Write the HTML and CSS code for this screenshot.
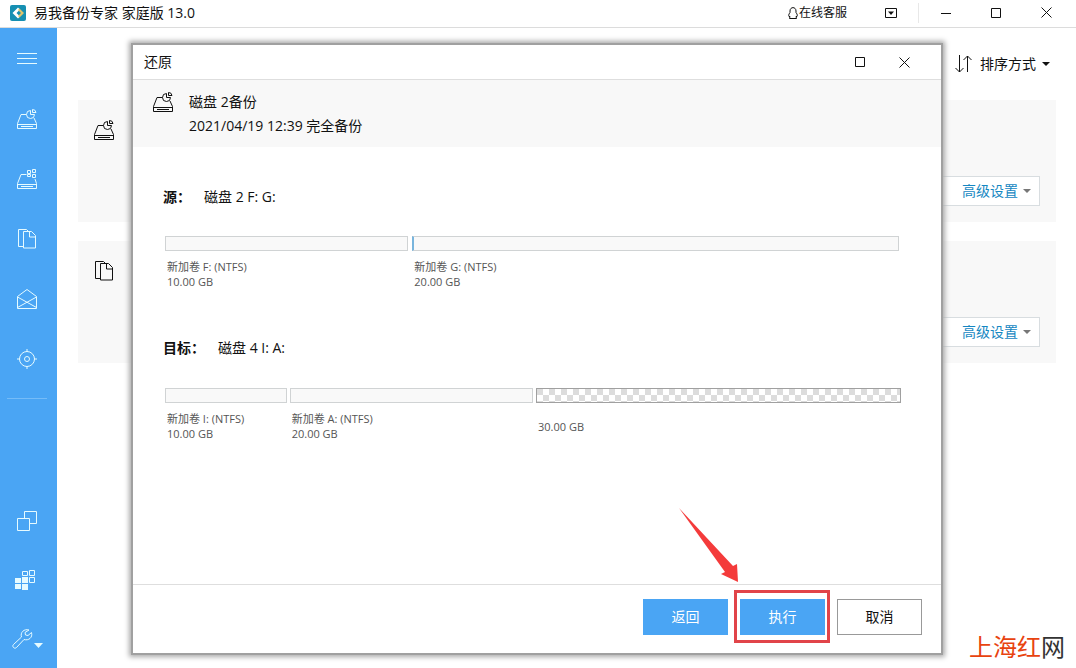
FILE: index.html
```html
<!DOCTYPE html>
<html lang="zh-CN">
<head>
<meta charset="utf-8">
<meta name="viewport" content="width=device-width, initial-scale=1">
<title>易我备份专家 家庭版 13.0</title>
<link rel="stylesheet" href="styles.css">
</head>
<body>
<svg class="defs" width="0" height="0" aria-hidden="true">
  <symbol id="disk" viewBox="0 0 20 20">
    <path d="M9.500 5.500H4L.5 14.500v5h19v-5L17 9M.5 15.500h19M4 17.500h12M13.500 1.500a4 4 0 1 0 4 4h-4zM15.500.5v3h3.500a3.500 3.500 0 0 0-3.500-3z"/>
  </symbol>
  <symbol id="system" viewBox="0 0 20 20">
    <path d="M9.500 5.500H4L.5 14.500v5h19v-5L18 10M.5 15.500h19M4 17.500h12M10.500 1.500h3v3h-3zM15.500.5h3v3h-3zM10.500 5.500h3v2h-3zM15.500 5.500h3v3h-3z"/>
  </symbol>
  <symbol id="files" viewBox="0 0 20 20">
    <path d="M6 17.500H1.500v-17h8l2 2M6.500 2.500h8l4 4v12.500h-12zM12.500 3v5h6"/>
  </symbol>
</svg>
<header class="titlebar">
  <svg class="logo" viewBox="0 0 16 16"><rect width="16" height="16" rx="2" fill="#168fb2"/><path d="M8 2.500 2.500 8 8 13.500l2-2L6.500 8 10 4.500z" fill="#fff"/><path d="m9.500 3.500-1.500 1.500L11 8l-3 3 1.500 1.500L14 8z" fill="#e0c46c"/></svg>
  <h1 class="app-name">易我备份专家 家庭版 13.0</h1>
  <button class="service"><svg class="qq" viewBox="0 0 10 12"><path d="M2 4C2-.5 8-.5 8 4v1.500c1.500 2 1.500 3 1 4H8l.5 2h-7l.5-2H1c-.5-1-.5-2 1-4z"/></svg>在线客服</button>
  <button class="win menu" aria-label="菜单"><svg width="12" height="12" viewBox="0 0 12 12"><path d="M.5 1.500h11v9H.5z"/><path class="solid" d="M3 4.500h6L6 8z"/></svg></button>
  <button class="win" aria-label="最小化"><svg width="10" height="12" viewBox="0 0 10 12"><path d="M0 6.500h10"/></svg></button>
  <button class="win" aria-label="最大化"><svg width="10" height="10" viewBox="0 0 10 10"><path d="M.5.5h9v9h-9z"/></svg></button>
  <button class="win" aria-label="关闭"><svg width="11" height="11" viewBox="0 0 11 11"><path d="m.5.5 10 10m0-10-10 10"/></svg></button>
</header>
<div class="workspace">
  <nav class="sidebar" aria-label="主导航">
    <button class="nav" aria-label="展开"><svg class="icon" viewBox="0 0 20 20"><path d="M0 4.500h20M0 9.500h20M0 14.500h20"/></svg></button>
    <button class="nav" aria-label="磁盘备份"><svg class="icon"><use href="#disk"/></svg></button>
    <button class="nav" aria-label="系统备份"><svg class="icon"><use href="#system"/></svg></button>
    <button class="nav" aria-label="文件备份"><svg class="icon"><use href="#files"/></svg></button>
    <button class="nav" aria-label="邮件备份"><svg class="icon" viewBox="0 0 20 20"><path d="M.5 7.500 10 .5l9.500 7v12H.5zM.5 8l19 10.500M19.500 8 .5 18.500"/></svg></button>
    <button class="nav" aria-label="智能备份"><svg class="icon" viewBox="0 0 20 20"><circle cx="10" cy="10" r="7.500"/><circle cx="10" cy="10" r="2.500"/><path d="M10 0v3M10 17v3M0 10h3M17 10h3"/></svg></button>
    <hr class="divider">
    <div class="tools">
      <button class="nav tool" aria-label="克隆"><svg class="icon" viewBox="0 0 20 20"><path d="M.5 7.500h12v12H.5zM7.500 7V.5h12v12H13"/></svg></button>
      <button class="nav tool shifted" aria-label="工具"><svg class="icon" viewBox="0 0 20 20"><path class="solid" d="M0 8h6v5H0zM7 7h6v6H7zM0 14h6v5H0zM7 14h6v6H7z"/><path d="M7.500 1.500h5v4h-5zM14.500.5h5v5h-5zM14.500 7.500h5v5h-5z"/></svg></button>
      <button class="nav tool wrench" aria-label="设置"><svg class="icon wide" viewBox="0 0 31 20"><path d="M17 1C12-.5 8 3.500 9.500 8L1.500 15.500c-2 2 1 5 3 3L12 10.500c4.500 1.500 9-2 7.500-7L16 6.500l-2.500-.5L13 3.500z"/><path class="solid" d="M22 14h9l-4.500 5z"/></svg></button>
    </div>
  </nav>
  <main class="content">
    <div class="toolbar">
      <button class="sort"><svg width="17" height="18" viewBox="0 0 17 18"><path d="M4.500 0v17M.5 13l4 4 4-4M12.500 17V1M8.500 5l4-4 4 4"/></svg>排序方式<span class="caret"></span></button>
    </div>
    <section class="card"><svg class="icon"><use href="#disk"/></svg><button class="advanced">高级设置<span class="caret"></span></button></section>
    <section class="card"><svg class="icon"><use href="#files"/></svg><button class="advanced">高级设置<span class="caret"></span></button></section>
  </main>
</div>
<section class="dialog" role="dialog" aria-labelledby="dialog-title">
  <header class="dialog-title">
    <h2 id="dialog-title">还原</h2>
    <button class="dialog-win" aria-label="最大化"><svg width="10" height="10" viewBox="0 0 10 10"><path d="M.5.5h9v9h-9z"/></svg></button>
    <button class="dialog-win" aria-label="关闭"><svg width="11" height="11" viewBox="0 0 11 11"><path d="m.5.5 10 10m0-10-10 10"/></svg></button>
  </header>
  <div class="summary">
    <svg class="icon"><use href="#disk"/></svg>
    <div><p>磁盘 2备份</p><p>2021/04/19 12:39 完全备份</p></div>
  </div>
  <div class="plan">
    <section class="disk">
      <h3><b>源：</b>磁盘 2 F: G:</h3>
      <div class="volumes source">
        <div class="volume"><div class="bar"></div><p>新加卷 F: (NTFS)</p><p>10.00 GB</p></div>
        <div class="volume"><div class="bar used"></div><p>新加卷 G: (NTFS)</p><p>20.00 GB</p></div>
      </div>
    </section>
    <section class="disk">
      <h3><b>目标：</b>磁盘 4 I: A:</h3>
      <div class="volumes target">
        <div class="volume"><div class="bar"></div><p>新加卷 I: (NTFS)</p><p>10.00 GB</p></div>
        <div class="volume"><div class="bar"></div><p>新加卷 A: (NTFS)</p><p>20.00 GB</p></div>
        <div class="volume"><div class="bar empty"></div><p class="free">30.00 GB</p></div>
      </div>
    </section>
  </div>
  <footer class="actions">
    <button class="action primary">返回</button>
    <div class="marked">
      <button class="action primary">执行</button>
      <svg class="arrow" viewBox="0 0 60 75"><path d="M0 0 54 58 58 56 59 74 42 66 46 64z"/></svg>
    </div>
    <button class="action">取消</button>
  </footer>
</section>
<p class="watermark"><span>上海红</span>网</p>
</body>
</html>
```

FILE: styles.css
```css
* { box-sizing: border-box; }
body {
  margin: 0;
  height: 100vh;
  display: flex;
  flex-direction: column;
  position: relative;
  overflow: hidden;
  background: #fff;
  color: #111;
  font: 14px/24px "Open Sans", "Noto Sans CJK SC", sans-serif;
}
h1, h2, h3, p { margin: 0; font-size: inherit; font-weight: 400; }
button {
  display: flex;
  align-items: center;
  justify-content: center;
  padding: 0;
  border: 0;
  background: none;
  color: inherit;
  font: inherit;
}
svg { flex: none; fill: none; stroke: currentColor; }
.solid { fill: currentColor; stroke: none; }
.defs { position: absolute; }
.icon { width: 20px; height: 20px; }
.caret {
  border: 4px solid transparent;
  border-top-color: currentColor;
  border-bottom: 0;
}

.titlebar {
  flex: none;
  display: flex;
  align-items: center;
  height: 28px;
  padding: 0 5px 2px 10px;
  border-bottom: 1px solid #dcdcdc;
}
.logo { width: 16px; height: 16px; stroke: none; }
.app-name { flex: 1; margin-left: 8px; }
.service { gap: 1px; margin-right: 16px; font-size: 12px; }
.qq { width: 10px; height: 12px; }
.win { width: 50px; height: 20px; }
.menu { width: 56px; margin-right: 2px; border-right: 1px solid #e8e8e8; }

.workspace { flex: 1; display: flex; min-height: 0; }
.sidebar {
  display: flex;
  flex-direction: column;
  width: 57px;
  padding-top: 1px;
  background: #4aa5f4;
  color: #e6fbff;
}
.nav { width: 57px; height: 60px; padding-right: 3px; }
.divider { width: 40px; height: 1px; margin: 9px 0 0 7px; border: 0; background: #75bcf8; }
.tools { margin-top: auto; }
.tool { height: 59px; }
.shifted { padding-right: 7px; }
.wrench { padding-right: 2px; }
.wide { width: 31px; }

.content {
  flex: 1;
  display: flex;
  flex-direction: column;
  gap: 19px;
  padding: 24px 20px 0 21px;
}
.toolbar { display: flex; justify-content: flex-end; height: 29px; padding-right: 6px; }
.sort { height: 24px; gap: 6px; }
.sort svg { margin-right: 2px; }
.card {
  display: flex;
  justify-content: space-between;
  align-items: flex-end;
  height: 122px;
  padding: 16px;
  background: #f8f8f8;
}
.card .icon { align-self: flex-start; margin-top: 4px; }
.advanced {
  width: 120px;
  height: 30px;
  justify-content: flex-end;
  gap: 5px;
  padding-right: 8px;
  border: 1px solid #d8dde0;
  background: #fff;
  color: #1587c2;
}
.advanced .caret { border-top-color: #777; }

.dialog {
  position: absolute;
  inset: 43px 133px 13px 131px;
  display: flex;
  flex-direction: column;
  border: 2px solid #a0a0a0;
  background: #fff;
  box-shadow: 0 0 5px 2px #aaa;
}
.dialog-title {
  display: flex;
  align-items: center;
  height: 35px;
  padding: 0 14px 0 11px;
  border-bottom: 1px solid #dedede;
}
.dialog-title h2 { flex: 1; }
.dialog-win { width: 45px; height: 30px; }
.summary { display: flex; gap: 16px; height: 67px; padding: 10px 20px; background: #f8f8f8; }
.summary .icon { margin-top: 2px; }
.plan { flex: 1; padding: 38px 0 0 30px; }
.disk { height: 151px; }
.disk h3 b { display: inline-block; margin-right: 13px; font-weight: 700; }
.volumes {
  display: grid;
  font-size: 11px;
  line-height: 15px;
  color: #555;
}
.source { grid-template-columns: 1fr 2fr; column-gap: 4px; margin: 27px 42px 0 2px; }
.target { grid-template-columns: 1fr 2fr 3fr; column-gap: 3px; margin: 28px 40px 0 2px; }
.volume p { padding-left: 2px; }
.volume .free { padding-top: 8px; }
.bar { height: 15px; margin-bottom: 8px; border: 1px solid #d0d3d4; background: #f9f9f9; }
.used { border-left: 2px solid #79b5dd; }
.empty {
  border-color: #a0a0a0;
  background: repeating-conic-gradient(#fff 0 25%, #dcdcdc 0 50%) 0 0 / 12px 12px;
}

.actions {
  display: flex;
  justify-content: flex-end;
  gap: 12px;
  padding: 14px 19px 18px;
  border-top: 1px solid #dedede;
}
.action { width: 85px; height: 36px; border: 1px solid #999; background: #fff; }
.primary { border-color: #4aa5f4; background: #4aa5f4; color: #fff; }
.marked { position: relative; }
.marked::after {
  content: "";
  position: absolute;
  inset: -9px -5px -8px -6px;
  border: 3px solid #e14449;
}
.arrow {
  position: absolute;
  right: 86px;
  bottom: 52px;
  width: 60px;
  height: 75px;
  fill: #f43b3b;
  stroke: none;
}

.watermark {
  position: absolute;
  right: 11px;
  bottom: 3px;
  font-size: 24px;
  line-height: 36px;
  color: #333;
}
.watermark span { color: #e8430f; }
```
